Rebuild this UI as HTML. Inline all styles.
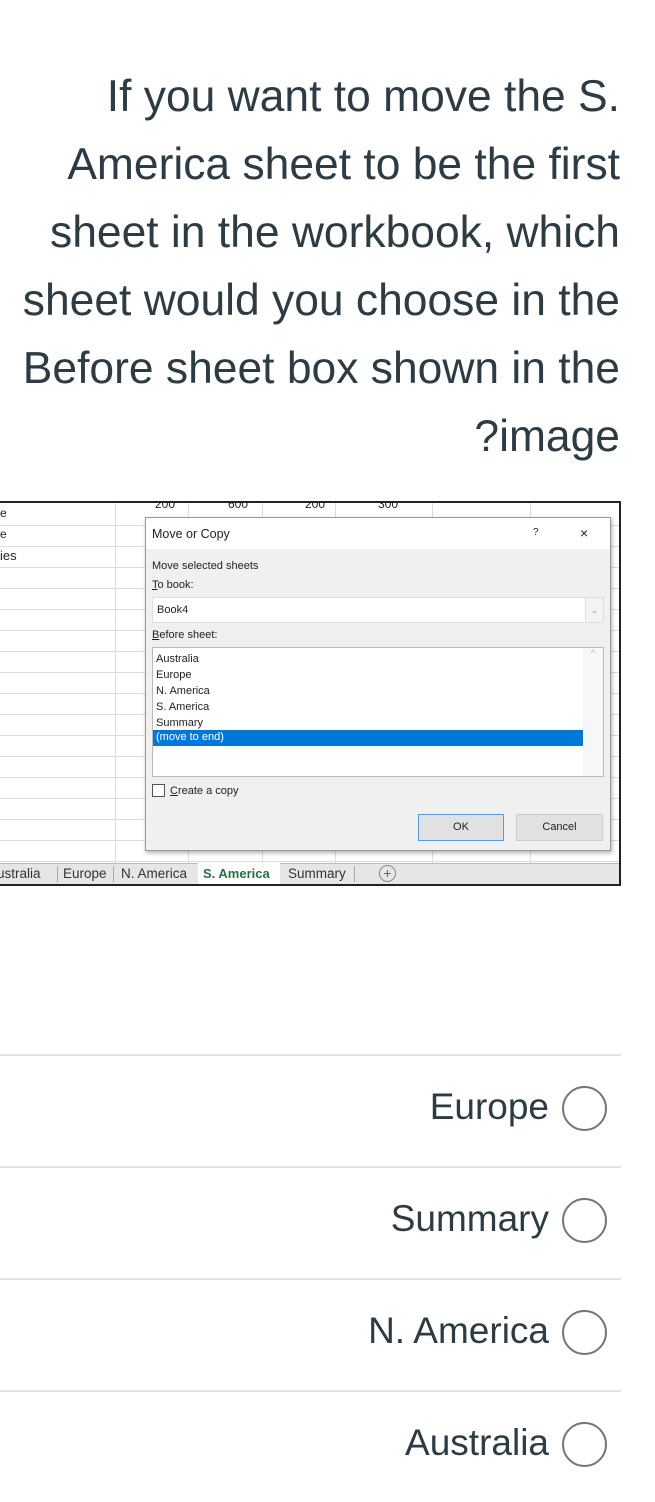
<!DOCTYPE html>
<html><head><meta charset="utf-8"><style>
*{margin:0;padding:0;box-sizing:border-box}
body{width:655px;height:1482px;background:#fff;font-family:"Liberation Sans",sans-serif;position:relative;overflow:hidden;color:#2d3b45}
.q{position:absolute;right:35px;top:63px;text-align:right;font-size:44.4px;line-height:68px;color:#2d3b45;width:650px;white-space:nowrap}
.img{position:absolute;left:0;top:501px;width:621px;height:385px;border-top:2px solid #222;border-bottom:2px solid #222;border-right:2px solid #222;background:#fff;overflow:hidden;font-size:11px;color:#222}
.hl{position:absolute;left:0;right:0;height:1px;background:#dcdcdc}
.vl{position:absolute;top:0;bottom:20px;width:1px;background:#dcdcdc}
.dlg{position:absolute;left:145px;top:14px;width:466px;height:334px;background:#f0f0f0;border:1px solid #999;box-shadow:1px 2px 4px rgba(0,0,0,.3)}
.tb{height:31px;background:#fff;position:relative}
.t{position:absolute;font-size:12px;color:#222}
.tabs{position:absolute;left:0;right:0;bottom:0;height:21px;background:#e6e6e6;border-top:1px solid #bbb;font-size:13.5px}
.tab{position:absolute;top:2px;color:#333}
.sep{position:absolute;top:2px;width:1px;height:16px;background:#aaa}
.opt{position:absolute;left:0;width:621px;height:112px;border-top:2px solid #e3e3e3}
.opt span{position:absolute;right:72px;top:30px;font-size:37px;color:#2d3b45}
.opt i{position:absolute;left:562px;top:30px;width:45px;height:45px;border:2px solid #777;border-radius:50%}
</style></head><body>
<div class="q">If you want to move the S.<br>America sheet to be the first<br>sheet in the workbook, which<br>sheet would you choose in the<br>Before sheet box shown in the<br>?image</div>

<div class="img">
<div class="hl" style="top:22px"></div><div class="hl" style="top:43px"></div><div class="hl" style="top:64px"></div><div class="hl" style="top:85px"></div><div class="hl" style="top:106px"></div><div class="hl" style="top:127px"></div><div class="hl" style="top:148px"></div><div class="hl" style="top:169px"></div><div class="hl" style="top:190px"></div><div class="hl" style="top:211px"></div><div class="hl" style="top:232px"></div><div class="hl" style="top:253px"></div><div class="hl" style="top:274px"></div><div class="hl" style="top:295px"></div><div class="hl" style="top:316px"></div><div class="hl" style="top:337px"></div><div class="hl" style="top:358px"></div>
<div class="vl" style="left:115px"></div><div class="vl" style="left:188px"></div><div class="vl" style="left:262px"></div><div class="vl" style="left:335px"></div><div class="vl" style="left:432px"></div><div class="vl" style="left:530px"></div>
<div class="t" style="left:0;top:3px">e</div><div class="t" style="left:0;top:24px">e</div><div class="t" style="left:0;top:45px;font-size:13px">ies</div>
<div class="t" style="left:155px;top:-6px">200</div><div class="t" style="left:228px;top:-6px">600</div><div class="t" style="left:305px;top:-6px">200</div><div class="t" style="left:378px;top:-6px">300</div>
<div class="dlg">
 <div class="tb"><div class="t" style="left:6px;top:9px;font-size:12.5px">Move or Copy</div><div class="t" style="left:387px;top:9px;font-size:10px">?</div><div class="t" style="left:434px;top:7px;font-size:14px">×</div></div>
 <div class="t" style="left:6px;top:42px;font-size:11px">Move selected sheets</div>
 <div class="t" style="left:6px;top:61px;font-size:11px"><u>T</u>o book:</div>
 <div style="position:absolute;left:6px;top:79px;width:452px;height:26px;background:#fff;border:1px solid #ddd"><div class="t" style="left:4px;top:6px;font-size:11px">Book4</div><div style="position:absolute;right:0;top:0;width:18px;height:24px;background:#f3f3f3;border-left:1px solid #ddd;color:#999;font-size:9px;text-align:center;line-height:24px">⌄</div></div>
 <div class="t" style="left:6px;top:111px;font-size:11px"><u>B</u>efore sheet:</div>
 <div style="position:absolute;left:6px;top:129px;width:452px;height:130px;background:#fff;border:1px solid #bbb">
  <div class="t" style="left:3px;top:3px;font-size:11px;line-height:16px">Australia<br>Europe<br>N. America<br>S. America<br>Summary</div>
  <div style="position:absolute;left:0;top:82px;width:430px;height:16px;background:#0078d7;color:#fff;font-size:11px;padding-left:3px;line-height:15px">(move to end)</div>
  <div style="position:absolute;right:0;top:0;width:20px;height:128px;background:#f7f7f7;color:#bbb;font-size:9px;text-align:center">^</div>
 </div>
 <div style="position:absolute;left:6px;top:266px;width:13px;height:13px;border:1px solid #555;background:#fff"></div>
 <div class="t" style="left:24px;top:267px;font-size:11px"><u>C</u>reate a copy</div>
 <div style="position:absolute;left:272px;top:296px;width:86px;height:27px;background:#e1e1e1;border:1px solid #5a9ad8;font-size:11px;text-align:center;line-height:25px">OK</div>
 <div style="position:absolute;left:370px;top:296px;width:87px;height:27px;background:#e1e1e1;border:1px solid #ccc;font-size:11px;text-align:center;line-height:25px">Cancel</div>
</div>
<div class="tabs">
 <div class="tab" style="left:-3px">ustralia</div><div class="sep" style="left:57px"></div>
 <div class="tab" style="left:63px">Europe</div><div class="sep" style="left:113px"></div>
 <div class="tab" style="left:121px">N. America</div>
 <div style="position:absolute;left:198px;top:-1px;width:82px;height:21px;background:#fff"></div>
 <div class="tab" style="left:203px;color:#217346;font-weight:bold;font-size:13px">S. America</div>
 <div class="tab" style="left:288px">Summary</div><div class="sep" style="left:354px"></div>
 <div class="tab" style="left:379px;top:1px;width:17px;height:17px;border:1px solid #888;border-radius:50%;text-align:center;line-height:15px;font-size:14px;color:#666">+</div>
</div>
</div>

<div class="opt" style="top:1054px"><span>Europe</span><i></i></div>
<div class="opt" style="top:1166px"><span>Summary</span><i></i></div>
<div class="opt" style="top:1278px"><span>N. America</span><i></i></div>
<div class="opt" style="top:1390px"><span>Australia</span><i></i></div>
</body></html>
